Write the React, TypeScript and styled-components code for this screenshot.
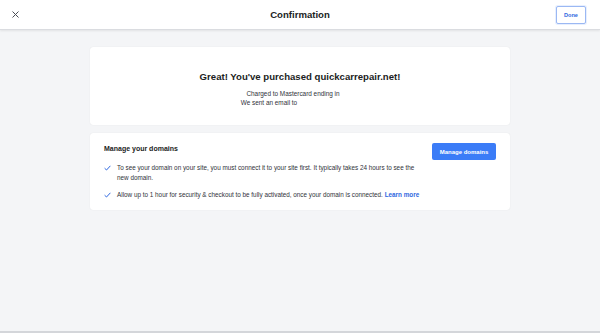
import styled, { createGlobalStyle } from "styled-components";

const GlobalStyle = createGlobalStyle`
  html, body {
    margin: 0;
    padding: 0;
    background: #f4f5f7;
    font-family: "Liberation Sans", Arial, sans-serif;
    color: #20232a;
  }
`;

const Page = styled.div`
  height: 333px;
  box-sizing: border-box;
  display: flex;
  flex-direction: column;
  border-bottom: 2px solid #d4d6da;
`;

const Header = styled.header`
  height: 29px;
  flex-shrink: 0;
  display: grid;
  grid-template-columns: 60px 1fr 60px;
  align-items: center;
  background: #ffffff;
  border-bottom: 1px solid #dadce0;
  box-shadow: 0 1px 2px rgba(0, 0, 0, 0.08);
`;

const CloseButton = styled.button`
  justify-self: start;
  margin-left: 10px;
  width: 10px;
  height: 10px;
  padding: 0;
  border: none;
  background: none;
  display: flex;
  align-items: center;
  justify-content: center;
  color: #4a4d55;
`;

const Title = styled.h1`
  margin: 0;
  text-align: center;
  font-size: 9.6px;
  font-weight: 700;
  color: #1b1d22;
`;

const DoneButton = styled.button`
  justify-self: end;
  margin-right: 14px;
  width: 30px;
  height: 18px;
  padding: 0;
  border: 1px solid #9bb8f3;
  border-radius: 2px;
  background: #ffffff;
  color: #2f68e0;
  font-family: inherit;
  font-size: 5.6px;
  font-weight: 700;
  box-shadow: 0 0 0 1px rgba(59, 124, 247, 0.12);
`;

const Main = styled.main`
  flex: 1;
  display: flex;
  flex-direction: column;
  align-items: center;
  gap: 8px;
  padding-top: 17px;
`;

const Card = styled.section<{ $center?: boolean }>`
  width: 420px;
  box-sizing: border-box;
  background: #ffffff;
  border-radius: 3px;
  box-shadow: 0 0 1px rgba(0, 0, 0, 0.12);
  ${({ $center }) =>
    $center
      ? `
    height: 78px;
    padding-top: 24px;
    text-align: center;
  `
      : `
    height: 77px;
    padding: 10px 14px 0 14px;
    display: flex;
    justify-content: space-between;
    align-items: flex-start;
  `}
`;

const Headline = styled.h2`
  margin: 0 0 7px;
  font-size: 9.6px;
  font-weight: 700;
  color: #1b1d22;
`;

const Note = styled.p<{ $shift: number }>`
  margin: 0;
  font-size: 6.4px;
  line-height: 9px;
  color: #30333a;
  transform: translateX(${({ $shift }) => $shift}px);
`;

const Body = styled.div`
  width: 322px;
`;

const SectionTitle = styled.h3`
  margin: 0 0 11px;
  padding-top: 2px;
  font-size: 7px;
  font-weight: 700;
  color: #1b1d22;
`;

const List = styled.ul`
  margin: 0;
  padding: 0;
  list-style: none;
  display: flex;
  flex-direction: column;
  gap: 7px;
`;

const Item = styled.li`
  display: flex;
  gap: 6px;
  font-size: 6.35px;
  line-height: 10px;
  color: #30333a;
`;

const Check = styled.span`
  flex-shrink: 0;
  width: 7px;
  height: 10px;
  display: flex;
  align-items: center;
`;

const Link = styled.a`
  color: #2f68e0;
  font-weight: 700;
  text-decoration: none;
`;

const PrimaryButton = styled.button`
  width: 64px;
  height: 17px;
  padding: 0;
  border: none;
  border-radius: 2px;
  background: #3b7cf7;
  color: #ffffff;
  font-family: inherit;
  font-size: 6px;
  font-weight: 700;
`;

function CheckIcon() {
  return (
    <svg width="7" height="6" viewBox="0 0 7 6" fill="none">
      <path d="M0.6 3.2 L2.5 5 L6.4 0.8" stroke="#2f68e0" strokeWidth="1" />
    </svg>
  );
}

export default function App() {
  return (
    <>
      <GlobalStyle />
      <Page>
        <Header>
          <CloseButton aria-label="Close">
            <svg width="7" height="7" viewBox="0 0 7 7">
              <path d="M0.5 0.5 L6.5 6.5 M6.5 0.5 L0.5 6.5" stroke="#4a4d55" strokeWidth="1" />
            </svg>
          </CloseButton>
          <Title>Confirmation</Title>
          <DoneButton>Done</DoneButton>
        </Header>
        <Main>
          <Card $center>
            <Headline>Great! You've purchased quickcarrepair.net!</Headline>
            <Note $shift={-7}>Charged to Mastercard ending in</Note>
            <Note $shift={-31}>We sent an email to</Note>
          </Card>
          <Card>
            <Body>
              <SectionTitle>Manage your domains</SectionTitle>
              <List>
                <Item>
                  <Check>
                    <CheckIcon />
                  </Check>
                  <span>
                    To see your domain on your site, you must connect it to your site first. It
                    typically takes 24 hours to see the new domain.
                  </span>
                </Item>
                <Item>
                  <Check>
                    <CheckIcon />
                  </Check>
                  <span>
                    Allow up to 1 hour for security &amp; checkout to be fully activated, once your
                    domain is connected. <Link href="#">Learn more</Link>
                  </span>
                </Item>
              </List>
            </Body>
            <PrimaryButton>Manage domains</PrimaryButton>
          </Card>
        </Main>
      </Page>
    </>
  );
}
